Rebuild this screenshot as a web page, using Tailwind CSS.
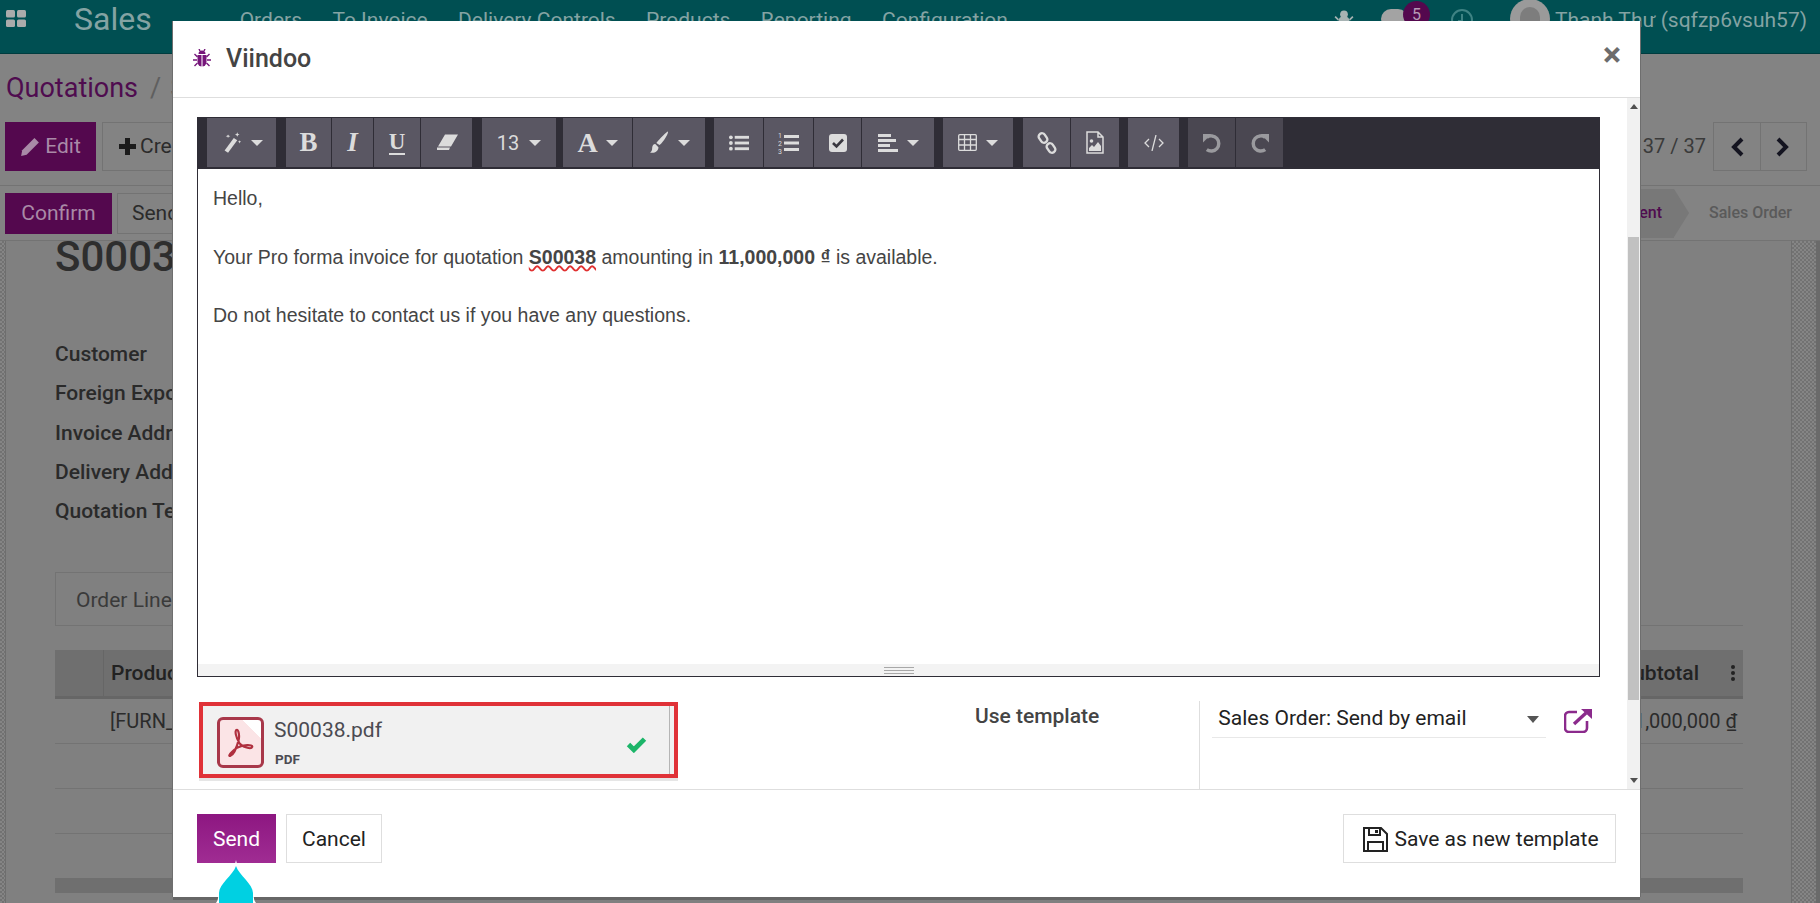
<!DOCTYPE html>
<html lang="en">
<head>
    <meta charset="UTF-8">
    <meta name="viewport" content="width=device-width, initial-scale=1.0">
    <title>Viindoo - Send by email</title>
    <script src="https://cdn.jsdelivr.net/npm/@tailwindcss/browser@4"></script>
</head>
<body>
<div class="relative w-[1820px] h-[903px] overflow-hidden bg-[#808080] font-[family-name:Roboto,sans-serif] text-[#2b2b2b]">

    <!-- page behind the dialog -->
    <div class="h-[54px] bg-[#004f52] border-b border-[#003c3f] flex items-start text-[#84a3a3]">
        <svg class="ml-[6px] mt-[10px]" width="20" height="17" viewBox="0 0 20 17" fill="#ababab"><rect width="9" height="7.5" rx="1.5"/><rect x="11" width="9" height="7.5" rx="1.5"/><rect y="9.5" width="9" height="7.5" rx="1.5"/><rect x="11" y="9.5" width="9" height="7.5" rx="1.5"/></svg>
        <span class="ml-[48px] mt-0 text-[32px] leading-[38px]">Sales</span>
        <nav class="ml-[88px] mt-[8px] flex gap-[30.400px] text-[21px] leading-[24px]">
            <span>Orders</span><span>To Invoice</span><span>Delivery Controls</span><span>Products</span><span>Reporting</span><span>Configuration</span>
        </nav>
        <div class="ml-auto flex items-start">
            <svg class="mt-[9px]" width="20" height="24" viewBox="0 0 18 20" fill="#a7b3b3"><circle cx="9" cy="4" r="3.5"/><rect x="4" y="6" width="10" height="12" rx="4"/><path d="M4 9 1 6M14 9l3-3M3 12H0M15 12h3" stroke="#a7b3b3" stroke-width="1.5"/></svg>
            <div class="ml-[27px] mt-[9px] w-[27px] h-[20px] rounded-full bg-[#a3a3a3]"></div>
            <div class="-ml-[5px] mt-[1px] w-[27px] h-[27px] rounded-full bg-[#54084e] text-[#b79ab5] text-[16px] leading-[27px] text-center">5</div>
            <svg class="ml-[21px] mt-[9px]" width="22" height="22" viewBox="0 0 22 22" fill="none" stroke="#3f8384" stroke-width="2"><circle cx="11" cy="11" r="10"/><path d="M11 5v7H7"/></svg>
            <div class="relative ml-[37px] -mt-[1px] w-[40px] h-[40px] rounded-full bg-[#9a9a9a] overflow-hidden"><div class="mx-auto mt-[8px] w-[20px] h-[32px] rounded-t-full bg-[#7d7d7d]"></div></div>
            <span class="ml-[5px] mt-[7px] mr-[13px] text-[21px] leading-[26px] whitespace-nowrap">Thanh Thư (sqfzp6vsuh57)</span>
        </div>
    </div>

    <div class="relative z-10 h-[187px] bg-[#838383] border-b border-[#737373]">
        <div class="pt-[16px] pl-[6px] h-[68px] text-[27px] leading-[36px] text-[#5f5f5f] whitespace-nowrap"><span class="text-[#4f0c4f]">Quotations</span><span class="ml-[12px] mr-[9px]">/</span>S00038</div>
        <div class="flex items-start h-[64px] border-b border-[#737373]">
            <div class="ml-[5px] w-[91px] h-[49px] bg-[#54084e] text-[#a98aa7] text-[21px] flex items-center justify-center gap-[5px]">
                <svg width="20" height="20" viewBox="0 0 18 18" fill="#a98aa7"><path d="M13 1l4 4L6 16l-5 1 1-5z"/></svg>Edit
            </div>
            <div class="ml-[6px] w-[140px] h-[49px] border border-[#737373] text-[21px] flex items-center pl-[16px] gap-[4px]">
                <svg width="17" height="17" viewBox="0 0 17 17" fill="#1b1b1b"><path d="M6 0h5v6h6v5h-6v6H6v-6H0V6h6z"/></svg>Create
            </div>
            <div class="ml-auto mt-[10px] mr-[7px] text-[20px] text-[#3a3a3a] leading-[28px]">37 / 37</div>
            <div class="w-[94px] h-[49px] mr-[13px] border border-[#737373] flex divide-x divide-[#737373]">
                <div class="flex-1 flex items-center justify-center"><svg width="14" height="20" viewBox="0 0 14 20" fill="none" stroke="#141420" stroke-width="4"><path d="M12 2 4 10l8 8"/></svg></div>
                <div class="flex-1 flex items-center justify-center"><svg width="14" height="20" viewBox="0 0 14 20" fill="none" stroke="#141420" stroke-width="4"><path d="M2 2l8 8-8 8"/></svg></div>
            </div>
        </div>
        <div class="flex items-center h-[54px]">
            <div class="ml-[5px] w-[107px] h-[41px] pt-[2px] bg-[#54084e] text-[#a98aa7] text-[21px] flex items-center justify-center">Confirm</div>
            <div class="ml-[5px] w-[120px] h-[41px] pt-[2px] border border-[#737373] text-[21px] flex items-center pl-[14px]">Send</div>
            <div class="ml-auto mr-[4px] h-[49px] flex items-center text-[16px] font-medium">
                <div class="relative w-[54px] h-[49px] bg-[#787878] flex items-center justify-end pr-[12px] text-[#4f0c4f]">ent</div>
                <div class="w-0 h-0 border-y-[24.5px] border-y-transparent border-l-[15px] border-l-[#787878]"></div>
                <span class="ml-[20px] mr-[24px] text-[#5a5a5a]">Sales Order</span>
            </div>
        </div>
    </div>

    <div class="flex h-[662px]">
        <div class="w-[5px] bg-[repeating-conic-gradient(#727272_0_25%,#858585_0_50%)] bg-[length:4px_4px]"></div>
        <div class="flex-1 border-x border-[#6e6e6e] pl-[49px] pr-[48px] overflow-hidden">
            <div class="-mt-[7px] h-[101px] text-[42px] leading-[46px] font-medium text-[#2e2e2e]">S00038</div>
            <div class="text-[21px] font-medium leading-[39.3px] text-[#2a2a2a]">
                <div>Customer</div><div>Foreign Export</div><div>Invoice Address</div><div>Delivery Address</div><div>Quotation Template</div>
            </div>
            <div class="mt-[41px] h-[54px] border-b border-[#737373]">
                <div class="w-[130px] h-[54px] border-l border-t border-[#737373] pl-[20px] text-[21px] leading-[54px] text-[#3a3a3a]">Order Lines</div>
            </div>
            <div class="mt-[24px] h-[49px] bg-[#6f6f6f] border-b-[3px] border-[#666] flex items-center justify-between text-[21px] font-medium text-[#222]">
                <div class="flex h-full items-center"><div class="w-[49px] h-full border-r border-[#666]"></div><span class="ml-[7px]">Product</span></div>
                <div class="flex items-center gap-[32px] pr-[8px]"><span>Subtotal</span><span class="flex flex-col gap-[2px]"><i class="block w-[4px] h-[4px] bg-[#222] rounded-full"></i><i class="block w-[4px] h-[4px] bg-[#222] rounded-full"></i><i class="block w-[4px] h-[4px] bg-[#222] rounded-full"></i></span></div>
            </div>
            <div class="h-[45px] border-b border-[#737373] flex items-center justify-between text-[20px] text-[#2b2b2b] pl-[55px] pr-[6px]"><span>[FURN_0001]</span><span>11,000,000 <u>₫</u></span></div>
            <div class="h-[45px] border-b border-[#737373]"></div>
            <div class="h-[45px] border-b border-[#737373]"></div>
            <div class="mt-[44px] h-[15px] bg-[#6f6f6f]"></div>
        </div>
        <div class="w-[24px] bg-[repeating-conic-gradient(#727272_0_25%,#858585_0_50%)] bg-[length:4px_4px]"></div>
        <div class="w-[4px] bg-[#6a6a6a]"></div>
    </div>

    <!-- dialog -->
    <div class="absolute z-20 left-[173px] top-[21px] w-[1467px] h-[876px] bg-white flex flex-col shadow-[0_3px_0_#666,-1px_0_0_#6e6e6e,1px_0_0_#6e6e6e]">
        <header class="h-[77px] shrink-0 border-b border-[#dedede] flex items-start">
            <svg class="ml-[20px] mt-[28px]" width="18" height="18" viewBox="0 0 18 18" fill="#76167a"><path d="M5.5 5a3.5 3.5 0 0 1 7 0z"/><path d="M4.5 6h9v7a4.5 4.5 0 0 1-9 0z"/><path d="M9 6v12" stroke="#fff" stroke-width="1"/><path d="M4.5 8 1.5 5M13.5 8l3-3M4 11H0M14 11h4M4.5 14 1.5 17M13.500 14l3 3M7 2 6 0M11 2l1-2" stroke="#76167a" stroke-width="1.400" fill="none"/></svg>
            <h1 class="ml-[15px] mt-[23px] text-[25px] leading-[30px] font-medium text-[#444]">Viindoo</h1>
            <span class="ml-auto mr-[19px] mt-[13px] text-[34px] leading-[40px] font-bold text-[#6c6c6c]">×</span>
        </header>

        <div class="h-[691px] shrink-0 flex">
            <div class="flex-1 min-w-0 flex flex-col">
                <div class="ml-[24px] mt-[19px] w-[1403px] h-[560px] shrink-0 border border-[#2f2d36] flex flex-col">
                    <!-- toolbar -->
                    <div class="h-[51px] shrink-0 bg-[#2f2d36] pl-[9px] flex items-start text-[#dcdcdc]">
                        <div class="flex h-[49px]">
                            <div class="w-[69px] bg-[#5a5763] flex items-center justify-center gap-[9px]">
                                <svg width="21" height="23" viewBox="0 0 18 20" fill="#dcdcdc"><path d="M11 6l3 2-8 11-3-2z"/><path d="M14 1l.6 1.6L16 3l-1.400.6L14 5l-.6-1.400L12 3l1.400-.4zM6 3l.5 1L8 4.500 6.500 5 6 6l-.5-1L4 4.500 5.500 4zM16 8l.4 1 1 .4-1 .4-.4 1-.4-1-1-.4 1-.4z"/></svg>
                                <div class="w-0 h-0 border-x-[6px] border-t-[6px] border-x-transparent border-t-[#dcdcdc]"></div>
                            </div>
                        </div>
                        <div class="ml-[10px] flex h-[49px] divide-x divide-[#2f2d36] bg-[#5a5763] font-[family-name:'Liberation_Serif',serif] text-[27px]">
                            <div class="w-[46px] flex items-center justify-center font-bold">B</div>
                            <div class="w-[42px] flex items-center justify-center italic font-bold">I</div>
                            <div class="w-[47px] flex items-center justify-center font-bold"><span class="border-b-2 border-[#dcdcdc] leading-[23px] text-[23px]">U</span></div>
                            <div class="w-[51px] flex items-center justify-center">
                                <svg width="22" height="17" viewBox="0 0 22 16" fill="#dcdcdc"><path d="M9 0h13l-7 12H2zM1 13h13l-1 2.500H1z"/></svg>
                            </div>
                        </div>
                        <div class="ml-[10px] w-[74px] h-[49px] bg-[#5a5763] flex items-center justify-center gap-[10px] text-[20px]">13<div class="w-0 h-0 border-x-[6px] border-t-[6px] border-x-transparent border-t-[#dcdcdc]"></div></div>
                        <div class="ml-[7px] flex h-[49px] divide-x divide-[#2f2d36] bg-[#5a5763]">
                            <div class="w-[70px] flex items-center justify-center gap-[8px] font-[family-name:'Liberation_Serif',serif] font-bold text-[28px]">A<div class="w-0 h-0 border-x-[6px] border-t-[6px] border-x-transparent border-t-[#dcdcdc]"></div></div>
                            <div class="w-[72px] flex items-center justify-center gap-[8px]">
                                <svg width="21" height="24" viewBox="0 0 20 22" fill="#dcdcdc"><path d="M18 0c1 1-4 10-8 13l-3-2c3-4 10-11 11-11zM6 12l3 3c0 4-4 6-8 5 2-1 2-3 2-4 0-2 1-4 3-4z"/></svg>
                                <div class="w-0 h-0 border-x-[6px] border-t-[6px] border-x-transparent border-t-[#dcdcdc]"></div>
                            </div>
                        </div>
                        <div class="ml-[9px] flex h-[49px] divide-x divide-[#2f2d36] bg-[#5a5763]">
                            <div class="w-[50px] flex items-center justify-center">
                                <svg class="ml-[1px]" width="20" height="16" viewBox="0 0 21 16" fill="#dcdcdc"><circle cx="2" cy="2" r="2"/><circle cx="2" cy="8" r="2"/><circle cx="2" cy="14" r="2"/><rect x="6" y="0.500" width="15" height="3"/><rect x="6" y="6.500" width="15" height="3"/><rect x="6" y="12.500" width="15" height="3"/></svg>
                            </div>
                            <div class="w-[50px] flex items-center justify-center">
                                <svg width="21" height="22" viewBox="0 0 21 22" fill="#dcdcdc"><text x="0" y="6" font-size="7" font-family="Roboto">1</text><text x="0" y="14" font-size="7" font-family="Roboto">2</text><text x="0" y="22" font-size="7" font-family="Roboto">3</text><rect x="6" y="3" width="15" height="3"/><rect x="6" y="9.500" width="15" height="3"/><rect x="6" y="16" width="15" height="3"/></svg>
                            </div>
                            <div class="w-[48px] flex items-center justify-center">
                                <svg width="18" height="18" viewBox="0 0 18 18"><rect width="18" height="18" rx="3" fill="#dcdcdc"/><path d="M4 9l3.500 3.500L14 5.500" fill="none" stroke="#3a3840" stroke-width="2.600"/></svg>
                            </div>
                            <div class="w-[72px] flex items-center justify-center gap-[9px]">
                                <svg width="20" height="18" viewBox="0 0 20 18" fill="#dcdcdc"><rect width="13" height="3"/><rect y="5" width="18" height="3"/><rect y="10" width="12" height="3"/><rect y="15" width="20" height="3"/></svg>
                                <div class="w-0 h-0 border-x-[6px] border-t-[6px] border-x-transparent border-t-[#dcdcdc]"></div>
                            </div>
                        </div>
                        <div class="ml-[9px] w-[70px] h-[49px] bg-[#5a5763] flex items-center justify-center gap-[9px]">
                            <svg width="19" height="17" viewBox="0 0 19 17" fill="none" stroke="#dcdcdc" stroke-width="1.300"><rect x="0.700" y="0.700" width="17.600" height="15.600" rx="1"/><path d="M.7 5.500h17.600M.7 11h17.600M6.500 1v15M12.500 1v15"/></svg>
                            <div class="w-0 h-0 border-x-[6px] border-t-[6px] border-x-transparent border-t-[#dcdcdc]"></div>
                        </div>
                        <div class="ml-[10px] flex h-[49px] divide-x divide-[#2f2d36] bg-[#5a5763]">
                            <div class="w-[48px] flex items-center justify-center">
                                <svg width="20" height="22" viewBox="0 0 20 22" fill="none" stroke="#dcdcdc" stroke-width="2.400"><rect x="-5" y="-3.300" width="10" height="6.600" rx="3.200" transform="translate(6 6) rotate(55)"/><rect x="-5" y="-3.300" width="10" height="6.600" rx="3.200" transform="translate(14 16) rotate(55)"/></svg>
                            </div>
                            <div class="w-[48px] flex items-center justify-center">
                                <svg width="18" height="23" viewBox="0 0 18 23" fill="none" stroke="#dcdcdc" stroke-width="1.500"><path d="M1 1h11l5 5v16H1zM12 1v5h5"/><circle cx="5.500" cy="10" r="1.800" fill="#dcdcdc" stroke="none"/><path d="M3 20v-3l3-3 2 2 4-5 3 4v5z" fill="#dcdcdc" stroke="none"/></svg>
                            </div>
                        </div>
                        <div class="ml-[9px] w-[51px] h-[49px] bg-[#5a5763] flex items-center justify-center">
                            <svg width="20" height="16" viewBox="0 0 20 16" fill="none" stroke="#dcdcdc" stroke-width="1.300"><path d="M5 4 1 8l4 4M15 4l4 4-4 4M12 0 8 16"/></svg>
                        </div>
                        <div class="ml-[9px] flex h-[49px] divide-x divide-[#2f2d36] bg-[#4a4751]">
                            <div class="w-[48px] flex items-center justify-center">
                                <svg width="18" height="20" viewBox="0 0 19 21" fill="none" stroke="#9a9a9e" stroke-width="3.600"><path d="M4 4.500a8 8 0 1 1 0 13"/><path d="M0 1l9 0-9 9z" fill="#9a9a9e" stroke="none"/></svg>
                            </div>
                            <div class="w-[47px] flex items-center justify-center">
                                <svg width="18" height="20" viewBox="0 0 19 21" fill="none" stroke="#9a9a9e" stroke-width="3.600"><path d="M15 4.500a8 8 0 1 0 0 13"/><path d="M19 1l-9 0 9 9z" fill="#9a9a9e" stroke="none"/></svg>
                            </div>
                        </div>
                    </div>
                    <!-- message -->
                    <div class="flex-1 pl-[15px] pt-[15px] font-[family-name:'Liberation_Sans',sans-serif] text-[19.500px] leading-[29.300px] text-[#454545]">
                        <p>Hello,</p>
                        <br>
                        <p>Your Pro forma invoice for quotation <b class="underline decoration-wavy decoration-[#e03030] decoration-2 underline-offset-1">S00038</b> amounting in <b>11,000,000 ₫</b> is available.</p>
                        <br>
                        <p>Do not hesitate to contact us if you have any questions.</p>
                    </div>
                    <div class="h-[12px] shrink-0 bg-[#f3f3f3] flex flex-col items-center justify-center gap-[2px]">
                        <i class="block w-[30px] h-px bg-[#a8a8a8]"></i><i class="block w-[30px] h-px bg-[#a8a8a8]"></i><i class="block w-[30px] h-px bg-[#a8a8a8]"></i>
                    </div>
                </div>

                <div class="flex-1 flex items-start">
                    <!-- attachment -->
                    <div class="ml-[26px] mt-[25px] w-[479px] h-[76px] border-4 border-[#e03238] bg-[#f1f1f1] shadow-[0_3px_0_#e6e6e6] flex relative">
                        <div class="relative ml-[14px] mt-[11px] w-[47px] h-[51px] rounded-[6px] border-[3px] border-[#a8384a] overflow-hidden bg-[linear-gradient(225deg,#ffffff_22%,#fbe4e6_22%)]">
                            <svg class="absolute left-[7px] top-[8px]" width="27" height="29" viewBox="0 0 30 32" fill="none" stroke="#b0303f" stroke-width="2.400"><path d="M11 2c-3 0-1 9 3 15 3 4 13 7 14 4 1-3-10-3-17 1C6 25 1 31 3 31c4 0 8-10 10-18 1-4 0-11-2-11z"/></svg>
                        </div>
                        <div class="ml-[10px]">
                            <div class="mt-[11px] text-[21px] leading-[26px] text-[#4b4b52]">S00038.pdf</div>
                            <div class="mt-[8px] ml-[1px] text-[13.500px] leading-[16px] font-bold text-[#4b4b52]">PDF</div>
                        </div>
                        <svg class="absolute left-[423px] top-[31px]" width="21" height="16" viewBox="0 0 19 15" fill="none" stroke="#1cb569" stroke-width="4.500"><path d="M2 7l5 5L17 2"/></svg>
                        <div class="absolute right-[4px] top-0 bottom-0 w-px bg-[#b5b5b5]"></div>
                    </div>
                    <div class="ml-[297px] mt-[26px] text-[21px] leading-[26px] font-medium text-[#444] whitespace-nowrap">Use template</div>
                    <div class="ml-[100px] mt-[24px] self-stretch flex-1 border-l border-[#dedede] flex items-start">
                        <div class="ml-[12px] w-[334px] h-[37px] border-b border-[#e8e8e8] flex items-center justify-between pl-[6px] pr-[7px] text-[21px] text-[#222]">
                            Sales Order: Send by email
                            <div class="w-0 h-0 border-x-[6px] border-t-[7px] border-x-transparent border-t-[#555]"></div>
                        </div>
                        <svg class="ml-[18px] mt-[7px]" width="29" height="25" viewBox="0 0 29 25" fill="none" stroke="#8b2a8c" stroke-width="2.600"><path d="M13 4H5a4 4 0 0 0-4 4v12a4 4 0 0 0 4 4h14a4 4 0 0 0 4-4v-7"/><path d="M10 16 22 5" stroke-width="3.400"/><path d="M17 1h11v10z" fill="#8b2a8c" stroke="none"/></svg>
                    </div>
                </div>
            </div>
            <!-- dialog scrollbar -->
            <div class="w-[13px] shrink-0 bg-[#f1f1f1] flex flex-col items-center">
                <div class="mt-[6px] w-0 h-0 border-x-[4px] border-b-[5px] border-x-transparent border-b-[#505050]"></div>
                <div class="mt-[128px] w-[11px] h-[463px] bg-[#c1c1c1]"></div>
                <div class="mt-[78px] w-0 h-0 border-x-[4px] border-t-[5px] border-x-transparent border-t-[#505050]"></div>
            </div>
        </div>

        <footer class="flex-1 border-t border-[#dedede] pt-[24px] pl-[24px] pr-[24px] flex items-start text-[21px]">
            <button class="w-[79px] h-[49px] pt-[2px] bg-gradient-to-b from-[#8d1681] to-[#a02c93] text-white">Send</button>
            <button class="ml-[10px] w-[96px] h-[49px] pt-[2px] border border-[#dedede] text-[#222]">Cancel</button>
            <button class="ml-auto w-[273px] h-[49px] pt-[2px] pl-[3px] border border-[#dedede] text-[#222] flex items-center justify-center gap-[6px]">
                <svg width="25" height="25" viewBox="0 0 25 25" fill="none" stroke="#222" stroke-width="2"><path d="M1 1h17l6 6v17H1z"/><path d="M6 1v7h11V1M5 24v-9h15v9"/><path d="M12 3h3v3h-3z" fill="#222" stroke="none"/></svg>
                Save as new template
            </button>
        </footer>
    </div>

    <!-- cyan guide drop -->
    <svg class="absolute z-30 left-[214px] top-[858px]" width="44" height="45" viewBox="0 0 44 45">
        <path d="M22 2C20 14 4 24 4 35c0 3 1 6-2 10h40c-3-4-2-7-2-10C40 24 24 14 22 2z" fill="#fff"/>
        <path d="M22 8C19 17 5 26 5 35c0 3 0 6 0 10h34c0-4 0-7 0-10C39 26 25 17 22 8z" fill="#00d0e2"/>
    </svg>
</div>
</body>
</html>
